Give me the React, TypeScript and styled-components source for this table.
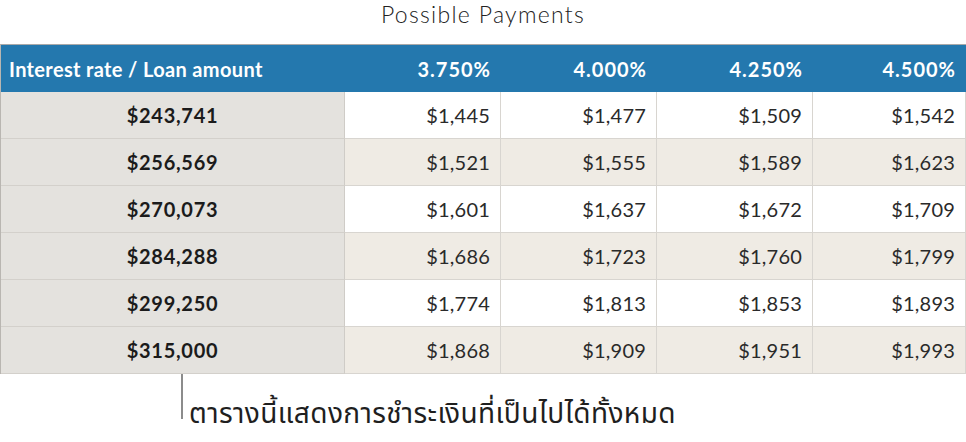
import React, { FC } from "react";
import styled, { createGlobalStyle } from "styled-components";

const GlobalStyle = createGlobalStyle`
  html, body {
    margin: 0;
    padding: 0;
    background: #ffffff;
  }
  body {
    font-family: Lato, "Noto Sans", sans-serif;
  }
`

const Wrapper = styled.main`
  width: 966px;
  height: 442px;
  overflow: hidden;
`
const Title = styled.h1`
  margin: 0;
  height: 44px;
  box-sizing: border-box;
  padding-top: 1px;
  text-align: center;
  font-family: Lato, sans-serif;
  font-size: 23px;
  line-height: 26px;
  font-weight: 300;
  letter-spacing: 1.3px;
  color: #222222;
`
const Table = styled.div`
  display: grid;
  grid-template-columns: 344px 156px 156px 156px 1fr;
  grid-auto-rows: 47px;
  border-top: 1px solid #a9a9a9;
  border-left: 1px solid #b9b6b1;
`
const HeaderCell = styled.div<{ $first?: boolean }>`
  display: flex;
  align-items: center;
  justify-content: ${(p) => (p.$first ? "flex-start" : "flex-end")};
  padding-left: ${(p) => (p.$first ? "8px" : "0")};
  padding-right: ${(p) => (p.$first ? "0" : "10px")};
  background: #2478ae;
  color: #ffffff;
  font-size: 20px;
  font-weight: 700;
  letter-spacing: ${(p) => (p.$first ? "0.35px" : "1px")};
`
const AmountCell = styled.div`
  display: flex;
  align-items: center;
  justify-content: center;
  background: #e4e2de;
  border-bottom: 1px solid #d3d0cb;
  border-right: 1px solid #cfccc7;
  font-size: 20px;
  font-weight: 700;
  letter-spacing: 0.7px;
  color: #1b1b1b;
`
const PaymentCell = styled.div<{ $shaded: boolean }>`
  display: flex;
  align-items: center;
  justify-content: flex-end;
  padding-right: 10px;
  background: ${(p) => (p.$shaded ? "#efebe4" : "#ffffff")};
  border-bottom: 1px solid #d8d5d0;
  border-right: 1px solid #d8d5d0;
  font-size: 20px;
  font-weight: 400;
  letter-spacing: 0.2px;
  color: #2a2a2a;
`
const Callout = styled.div`
  display: flex;
  align-items: flex-end;
  margin-left: 181px;
`
const Leader = styled.div`
  width: 2px;
  height: 45px;
  flex-shrink: 0;
  background: #8c8c8c;
`
const CalloutText = styled.span`
  margin-left: 6px;
  margin-bottom: -10px;
  font-family: "Noto Sans Thai", "Noto Sans", "DejaVu Sans", sans-serif;
  font-size: 28px;
  line-height: 1;
  letter-spacing: 0.4px;
  white-space: nowrap;
  color: #1f1f1f;
`

const rates = ["3.750%", "4.000%", "4.250%", "4.500%"]

interface Row {
  amount: string
  payments: string[]
}

const rows: Row[] = [
  { amount: "$243,741", payments: ["$1,445", "$1,477", "$1,509", "$1,542"] },
  { amount: "$256,569", payments: ["$1,521", "$1,555", "$1,589", "$1,623"] },
  { amount: "$270,073", payments: ["$1,601", "$1,637", "$1,672", "$1,709"] },
  { amount: "$284,288", payments: ["$1,686", "$1,723", "$1,760", "$1,799"] },
  { amount: "$299,250", payments: ["$1,774", "$1,813", "$1,853", "$1,893"] },
  { amount: "$315,000", payments: ["$1,868", "$1,909", "$1,951", "$1,993"] },
]

const App: FC = () => {
  return (
    <Wrapper>
      <GlobalStyle />
      <Title>Possible Payments</Title>
      <Table>
        <HeaderCell $first>Interest rate / Loan amount</HeaderCell>
        {rates.map((rate) => (
          <HeaderCell key={rate}>{rate}</HeaderCell>
        ))}
        {rows.map((row, i) => (
          <React.Fragment key={row.amount}>
            <AmountCell>{row.amount}</AmountCell>
            {row.payments.map((payment, j) => (
              <PaymentCell key={j} $shaded={i % 2 === 1}>
                {payment}
              </PaymentCell>
            ))}
          </React.Fragment>
        ))}
      </Table>
      <Callout>
        <Leader />
        <CalloutText>ตารางนี้แสดงการชำระเงินที่เป็นไปได้ทั้งหมด</CalloutText>
      </Callout>
    </Wrapper>
  )
}

export default App
